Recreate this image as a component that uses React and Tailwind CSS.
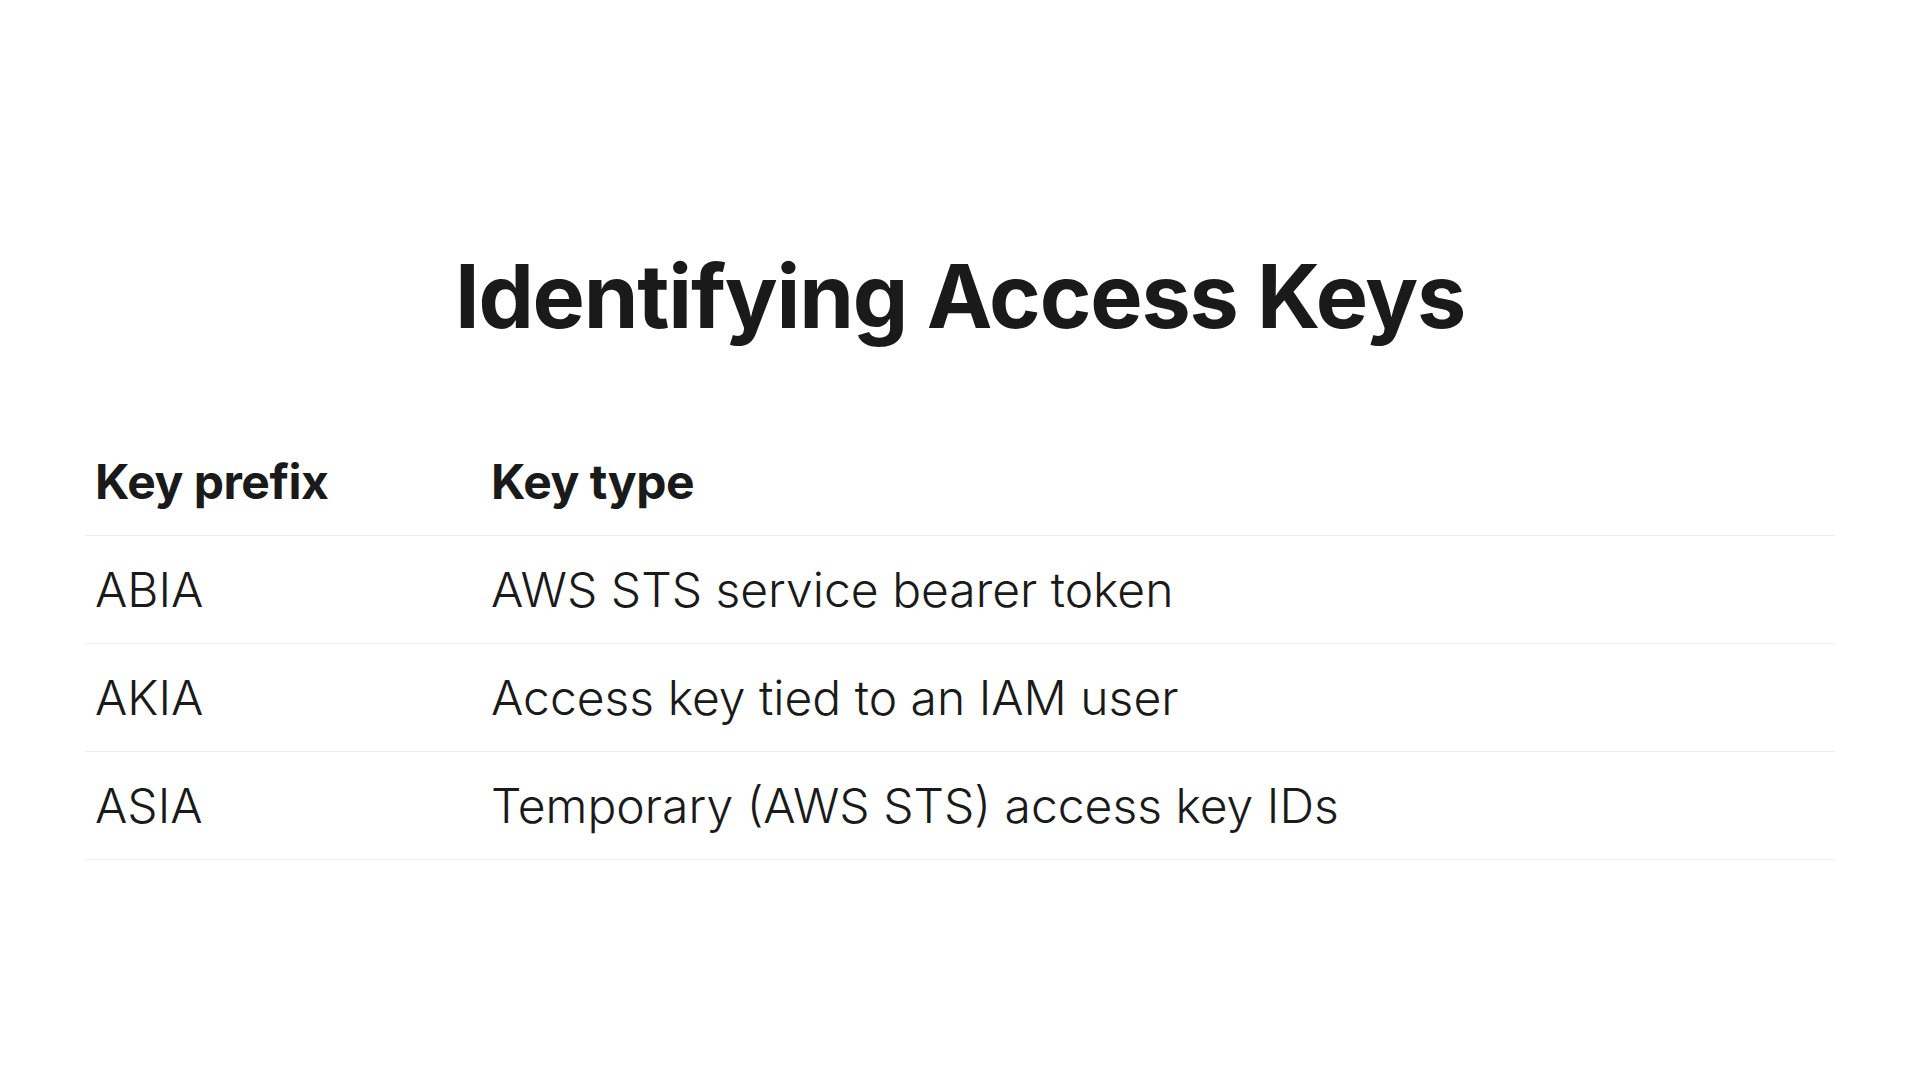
const rows = [
  { prefix: "ABIA", type: "AWS STS service bearer token" },
  { prefix: "AKIA", type: "Access key tied to an IAM user" },
  { prefix: "ASIA", type: "Temporary (AWS STS) access key IDs" },
];

export default function App() {
  return (
    <div
      className="min-h-[1082px] w-full bg-white text-[#1a1a1a] px-[85px] pt-[252px]"
      style={{ fontFamily: "Inter, 'Noto Sans', sans-serif" }}
    >
      <h1 className="text-center text-[88px] leading-none font-bold tracking-[-0.014em]">
        Identifying Access Keys
      </h1>

      <div className="mt-[88px]">
        <div className="flex h-[108px] items-center border-b border-[#ececec] text-[48px] leading-none font-bold tracking-[-0.01em]">
          <div className="w-[396px] pl-[10px]">Key prefix</div>
          <div className="flex-1 pl-[10px]">Key type</div>
        </div>
        {rows.map((r) => (
          <div
            key={r.prefix}
            className="flex h-[108px] items-center border-b border-[#ececec] text-[48px] leading-none font-light"
          >
            <div className="w-[396px] pl-[10px]">{r.prefix}</div>
            <div className="flex-1 pl-[10px]">{r.type}</div>
          </div>
        ))}
      </div>
    </div>
  );
}
